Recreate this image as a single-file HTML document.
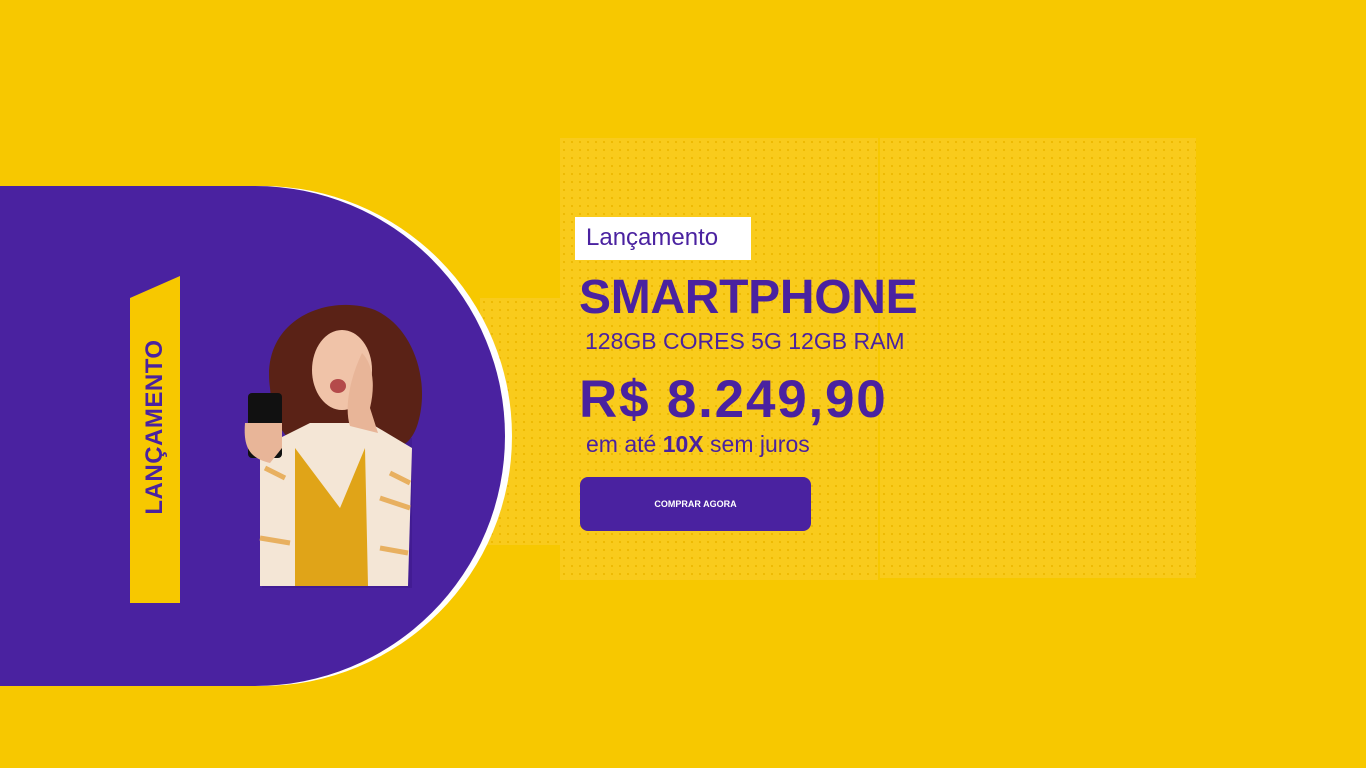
<!DOCTYPE html>
<html><head><meta charset="utf-8"><style>
*{margin:0;padding:0;box-sizing:border-box}
body{width:1366px;height:768px;background:#F7C800;position:relative;overflow:hidden;font-family:"Liberation Sans",sans-serif}
.dots{position:absolute;background-color:#F9CB1C;background-image:radial-gradient(circle,#EDB900 0.9px,transparent 1.3px);background-size:8px 8px}
.abs{position:absolute}
.pur{color:#4A22A0}
</style></head><body>
<div class="dots" style="left:480px;top:298px;width:90px;height:247px"></div>
<div class="dots" style="left:560px;top:138px;width:318px;height:442px"></div>
<div class="dots" style="left:880px;top:138px;width:316px;height:440px"></div>
<div class="abs" style="left:0;top:186px;width:512px;height:500px;background:#fff;border-radius:0 250px 250px 0"></div>
<div class="abs" style="left:0;top:186px;width:505px;height:500px;background:#4A22A0;border-radius:0 250px 250px 0"></div>
<svg class="abs" style="left:130px;top:276px" width="50" height="327"><polygon points="0,22 50,0 50,327 0,327" fill="#F7C800"/></svg>
<div class="abs pur" style="left:155px;top:427px;transform:translate(-50%,-50%) rotate(-90deg);font-weight:bold;font-size:24px;white-space:nowrap;letter-spacing:0.5px">LANÇAMENTO</div>
<svg class="abs" style="left:240px;top:298px" width="185" height="295">
<rect x="22" y="140" width="150" height="150" fill="#3A1585" opacity=".5"/>
<path d="M30 90 C20 20 90 -5 135 12 C175 30 190 85 178 125 C172 145 160 152 150 147 L60 147 C40 140 32 115 30 90Z" fill="#5A2216"/>
<ellipse cx="102" cy="72" rx="30" ry="40" fill="#F0C3A8"/>
<ellipse cx="98" cy="88" rx="8" ry="7" fill="#B44A4A"/>
<path d="M20 150 L70 125 L130 125 L172 150 L168 288 L20 288Z" fill="#F4E6D6"/>
<path d="M55 150 L100 210 L125 150 L128 288 L55 288Z" fill="#E0A418"/>
<path d="M25 170 L45 180 M150 175 L170 185 M140 200 L170 210 M20 240 L50 245 M140 250 L168 255" stroke="#E8B060" stroke-width="5"/>
<rect x="8" y="95" width="34" height="65" rx="4" fill="#111"/>
<path d="M5 125 C3 150 10 160 30 165 L42 150 L42 125Z" fill="#E8B598"/>
<path d="M122 55 C132 65 136 85 130 110 L138 135 L110 128 C104 110 110 80 122 55Z" fill="#E8B598"/>
</svg>
<div class="abs" style="left:575px;top:217px;width:176px;height:43px;background:#fff"></div>
<div class="abs pur" style="left:586px;top:224px;font-size:24px">Lançamento</div>
<div class="abs pur" style="left:579px;top:270px;font-size:48px;font-weight:bold;letter-spacing:-0.3px">SMARTPHONE</div>
<div class="abs pur" style="left:585px;top:328px;font-size:23px">128GB CORES 5G 12GB RAM</div>
<div class="abs pur" style="left:579px;top:369px;font-size:53px;font-weight:bold;letter-spacing:1.8px">R$ 8.249,90</div>
<div class="abs pur" style="left:586px;top:431px;font-size:23px">em até <b>10X</b> sem juros</div>
<div class="abs" style="left:580px;top:477px;width:231px;height:54px;background:#4A22A0;border-radius:8px;color:#fff;font-size:9px;font-weight:bold;text-align:center;line-height:54px">COMPRAR AGORA</div>
</body></html>
